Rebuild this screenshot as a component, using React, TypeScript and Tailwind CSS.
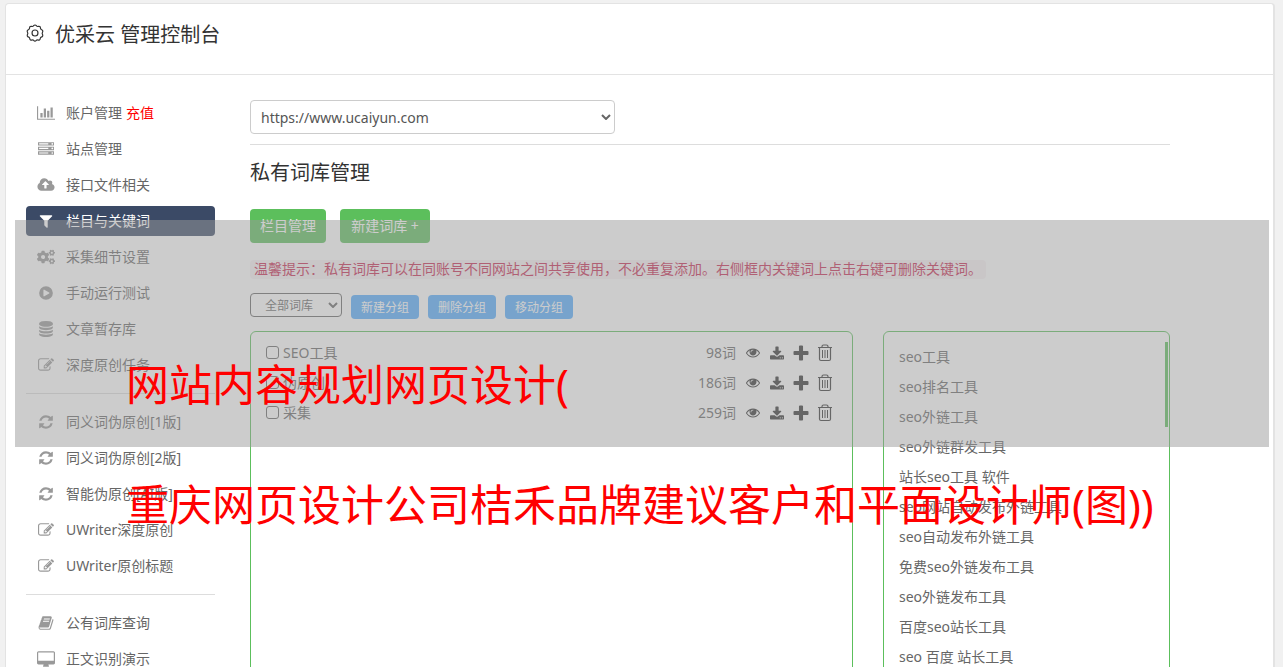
import type { ReactNode } from "react";
import clsx from "clsx";
import { FaCogs } from "react-icons/fa";

interface GlyphProps {
  viewBox: string;
  d: string;
  className?: string;
}

interface NavItem {
  label: string;
  icon: ReactNode;
  badge?: string;
  active?: boolean;
}

const Glyph = ({ viewBox, d, className }: GlyphProps) => (
  <svg viewBox={viewBox} className={clsx("shrink-0", className)} fill="currentColor" fillRule="evenodd" aria-hidden="true">
    <path d={d} />
  </svg>
);

const ChartIcon = () => (
  <Glyph
    className="h-4 w-[18px]"
    viewBox="0 0 2048 1792"
    d="M640 896v512H384V896h256zm384-512v1024H768V384h256zm1024 1152v128H0V128h128v1408h1920zm-640-896v768h-256V640h256zm384-384v1152h-256V256h256z"
  />
);

const ServerIcon = () => (
  <Glyph
    className="size-4"
    viewBox="0 0 1792 1792"
    d="M128 1408h1024v-128H128v128zm0-512h1024V768H128v128zm1568 448q0-40-28-68t-68-28-68 28-28 68 28 68 68 28 68-28 28-68zM128 384h1024V256H128v128zm1568 448q0-40-28-68t-68-28-68 28-28 68 28 68 68 28 68-28 28-68zm0-512q0-40-28-68t-68-28-68 28-28 68 28 68 68 28 68-28 28-68zm96 832v384H0v-384h1792zm0-512v384H0V640h1792zm0-512v384H0V128h1792z"
  />
);

const CloudIcon = () => (
  <Glyph
    className="h-4 w-[18px]"
    viewBox="0 0 1920 1792"
    d="M1280 864q0-14-9-23L919 489q-9-9-23-9t-23 9L522 840q-10 12-10 24 0 14 9 23t23 9h224v352q0 13 9.500 22.500t22.500 9.500h192q13 0 22.500-9.500t9.500-22.500V896h224q13 0 22.500-9.500t9.500-22.500zm640 288q0 159-112.500 271.500T1536 1536H448q-185 0-316.500-131.500T0 1088q0-130 70-240t188-165q-2-30-2-43 0-212 150-362t362-150q156 0 285.500 87T1242 446q71-62 166-62 106 0 181 75t75 181q0 76-41 138 130 31 213.500 135.500T1920 1152z"
  />
);

const FilterIcon = () => (
  <Glyph
    className="size-4"
    viewBox="0 0 1792 1792"
    d="M1595 295q17 41-14 70l-493 493v742q0 42-39 59-13 5-25 5-27 0-45-19l-256-256q-19-19-19-45V858L211 365q-31-29-14-70 17-39 59-39h1280q42 0 59 39z"
  />
);

const PlayIcon = () => (
  <Glyph
    className="size-4"
    viewBox="0 0 1792 1792"
    d="M896 128a768 768 0 1 1 0 1536a768 768 0 1 1 0-1536zM1280 896q0-37-32-55L704 521q-31-19-64-1-32 19-32 56v640q0 37 32 56 16 8 32 8 17 0 32-9l544-320q32-18 32-55z"
  />
);

const DatabaseIcon = () => (
  <Glyph
    className="h-4 w-[14px]"
    viewBox="0 0 1536 1792"
    d="M768 768q237 0 443-43t325-127v170q0 69-103 128t-280 93.500T768 1024t-385-34.500T103 896 0 768V598q119 84 325 127t443 43zm0 768q237 0 443-43t325-127v170q0 69-103 128t-280 93.500-385 34.500-385-34.500T103 1664 0 1536v-170q119 84 325 127t443 43zm0-384q237 0 443-43t325-127v170q0 69-103 128t-280 93.500-385 34.500-385-34.500T103 1280 0 1152V982q119 84 325 127t443 43zM768 0q208 0 385 34.500T1433 128t103 128v128q0 69-103 128t-280 93.500T768 640t-385-34.500T103 512 0 384V256q0-69 103-128t280-93.500T768 0z"
  />
);

const EditIcon = () => (
  <Glyph
    className="size-4"
    viewBox="0 0 1792 1792"
    d="M888 1184l116-116-152-152-116 116v56h96v96h56zm440-720q-16-16-33 1L945 815q-17 17-1 33t33-1l350-350q17-17 1-33zm80 594v190q0 119-84.500 203.500T1120 1536H288q-119 0-203.500-84.500T0 1248V416q0-119 84.500-203.500T288 128h832q63 0 117 25 15 7 18 23 3 17-9 29l-49 49q-14 14-32 8-23-6-45-6H288q-66 0-113 47t-47 113v832q0 66 47 113t113 47h832q66 0 113-47t47-113v-126q0-13 9-22l64-64q15-15 35-7t20 29zm-96-738l288 288-672 672H640V992zm444 132l-92 92-288-288 92-92q28-28 68-28t68 28l152 152q28 28 28 68t-28 68z"
  />
);

const RefreshIcon = () => (
  <Glyph
    className="size-4"
    viewBox="0 0 1792 1792"
    d="M1639 1056q0 5-1 7-64 268-268 434.500T892 1664q-146 0-282.500-55T366 1452l-129 129q-19 19-45 19t-45-19-19-45v-448q0-26 19-45t45-19h448q26 0 45 19t19 45-19 45l-137 137q71 66 161 102t187 36q134 0 250-65t186-179q11-17 53-117 8-23 30-23h192q13 0 22.500 9.500t9.500 22.500zm25-800v448q0 26-19 45t-45 19h-448q-26 0-45-19t-19-45 19-45l138-138Q1097 384 896 384q-134 0-250 65T460 628q-11 17-53 117-8 23-30 23H178q-13 0-22.500-9.500T146 736v-7q65-268 270-434.500T896 128q146 0 284 55.500T1425 340l130-129q19-19 45-19t45 19 19 45z"
  />
);

const BookIcon = () => (
  <Glyph
    className="size-4"
    viewBox="0 0 1664 1792"
    d="M1639 478q40 57 18 129l-275 906q-19 64-76.500 107.500T1183 1664H260q-77 0-148.500-53.500T12 1479q-24-67-2-127 0-4 3-27t4-37q1-8-3-21.500t-3-19.500q2-11 8-21t16.500-23.500T52 1179q23-38 45-91.500t30-91.500q3-10 .5-30t-.5-28q3-11 17-28t17-23q21-36 42-92t25-90q1-9-2.500-32t.5-28q4-13 22-30.500t22-22.500q19-26 42.500-84.500T339 411q1-8-3-25.500t-2-26.500q2-8 9-18t18-23 17-21q8-12 16.500-30.500t15-35 16-36T424.500 163t23.500-23.500T484 128.500t47.500 4.500l-1 3q38-9 51-9h761q74 0 114 56t18 130l-274 906q-36 119-71.500 153.500T1001 1408H132q-27 0-38 15-11 16-1 43 24 70 144 70h923q29 0 56-15.500t35-41.500l300-987q7-22 5-57 38 15 59 43zm-1064 2q-4 13 2 22.500t20 9.500h608q13 0 25.500-9.500T1247 480l21-64q4-13-2-22.500t-20-9.500H638q-13 0-25.500 9.500T596 416zm-83 256q-4 13 2 22.500t20 9.500h608q13 0 25.500-9.500T1164 736l21-64q4-13-2-22.500t-20-9.500H555q-13 0-25.500 9.500T513 672z"
  />
);

const DesktopIcon = () => (
  <Glyph
    className="h-4 w-[18px]"
    viewBox="0 0 1920 1664"
    d="M1792 992V160q0-13-9.500-22.500T1760 128H160q-13 0-22.500 9.500T128 160v832q0 13 9.500 22.500t22.500 9.500h1600q13 0 22.500-9.500t9.500-22.500zm128-832v1088q0 66-47 113t-113 47h-544q0 37 16 77.500t32 71 16 43.500q0 26-19 45t-45 19H704q-26 0-45-19t-19-45q0-14 16-44t32-70 16-78H160q-66 0-113-47T0 1248V160q0-66 47-113T160 0h1600q66 0 113 47t47 113z"
  />
);

const EyeIcon = () => (
  <Glyph
    className="size-[14px]"
    viewBox="0 64 1792 1792"
    d="M1664 960q-152-236-381-353 61 104 61 225 0 185-131.500 316.500T896 1280t-316.500-131.500T448 832q0-121 61-225-229 117-381 353 133 205 333.500 326.500T896 1408t434.500-121.500T1664 960zm-720-384q0-20-14-34t-34-14q-125 0-214.500 89.500T592 832q0 20 14 34t34 14 34-14 14-34q0-86 61-147t147-61q20 0 34-14t14-34zm848 384q0 34-20 69-140 230-376.500 368.500T896 1536t-499.500-139T20 1029Q0 994 0 960t20-69q140-229 376.500-368T896 384t499.500 139T1772 891q20 35 20 69z"
  />
);

const DownloadIcon = () => (
  <Glyph
    className="size-[14px]"
    viewBox="64 0 1664 1536"
    d="M1344 1344q0-26-19-45t-45-19-45 19-19 45 19 45 45 19 45-19 19-45zm256 0q0-26-19-45t-45-19-45 19-19 45 19 45 45 19 45-19 19-45zm128-224v320q0 40-28 68t-68 28H160q-40 0-68-28t-28-68v-320q0-40 28-68t68-28h465l135 136q58 56 136 56t136-56l136-136h464q40 0 68 28t28 68zm-325-569q17 41-14 70l-448 448q-18 19-45 19t-45-19L403 621q-31-29-14-70 17-39 59-39h256V64q0-26 19-45t45-19h256q26 0 45 19t19 45v448h256q42 0 59 39z"
  />
);

const PlusIcon = () => (
  <Glyph
    className="size-4"
    viewBox="144 80 1504 1504"
    d="M1600 736v192q0 40-28 68t-68 28h-416v416q0 40-28 68t-68 28H800q-40 0-68-28t-28-68v-416H288q-40 0-68-28t-28-68V736q0-40 28-68t68-28h416V224q0-40 28-68t68-28h192q40 0 68 28t28 68v416h416q40 0 68 28t28 68z"
  />
);

const TrashIcon = () => (
  <svg viewBox="0 0 16 18" className="h-[18px] w-4 shrink-0" fill="none" stroke="currentColor" aria-hidden="true">
    <path d="M1 3.500h14M2.500 3.500v11.500q0 1.500 1.500 1.500h8q1.500 0 1.500-1.500V3.500M5 3.500V2.500q0-1.500 1.500-1.500h3q1.500 0 1.500 1.500v1" strokeWidth="1.200" />
    <path d="M5.500 6v8M8 6v8M10.500 6v8" />
  </svg>
);

const GearIcon = () => (
  <svg viewBox="0 0 20 20" className="size-[18px] shrink-0" fill="none" stroke="currentColor" strokeWidth="1.300" strokeLinejoin="round" aria-hidden="true">
    <path d="M8.200 2.200Q10 0 11.800 2.200Q12.300 3 13.200 2.700Q16 2 16.100 4.800Q16.100 5.700 17 6.100Q19.600 7.200 18.200 9.600Q17.700 10.400 18.200 11.200Q19.500 13.600 16.900 14.600Q16 15 15.900 15.900Q15.500 18.500 12.900 17.700Q12.100 17.400 11.500 18.100Q10 19.800 8.500 18.100Q7.900 17.400 7.100 17.700Q4.500 18.500 4.100 15.900Q4 15 3.100 14.600Q0.500 13.600 1.800 11.200Q2.300 10.400 1.800 9.600Q0.400 7.200 3 6.100Q3.900 5.700 3.900 4.800Q4 2 6.800 2.700Q7.700 3 8.200 2.200Z" />
    <circle cx="10" cy="10" r="3.300" />
  </svg>
);

const navGroups: NavItem[][] = [
  [
    { label: "账户管理", icon: <ChartIcon />, badge: "充值" },
    { label: "站点管理", icon: <ServerIcon /> },
    { label: "接口文件相关", icon: <CloudIcon /> },
    { label: "栏目与关键词", icon: <FilterIcon />, active: true },
    { label: "采集细节设置", icon: <FaCogs className="size-[18px]" /> },
    { label: "手动运行测试", icon: <PlayIcon /> },
    { label: "文章暂存库", icon: <DatabaseIcon /> },
    { label: "深度原创任务", icon: <EditIcon /> },
  ],
  [
    { label: "同义词伪原创[1版]", icon: <RefreshIcon /> },
    { label: "同义词伪原创[2版]", icon: <RefreshIcon /> },
    { label: "智能伪原创[AI版]", icon: <RefreshIcon /> },
    { label: "UWriter深度原创", icon: <EditIcon /> },
    { label: "UWriter原创标题", icon: <EditIcon /> },
  ],
  [
    { label: "公有词库查询", icon: <BookIcon /> },
    { label: "正文识别演示", icon: <DesktopIcon /> },
  ],
];

const libraries = [
  { name: "SEO工具", count: 98 },
  { name: "伪原创", count: 186 },
  { name: "采集", count: 259 },
];

const keywords = [
  "seo工具",
  "seo排名工具",
  "seo外链工具",
  "seo外链群发工具",
  "站长seo工具 软件",
  "seo网站自动发布外链工具",
  "seo自动发布外链工具",
  "免费seo外链发布工具",
  "seo外链发布工具",
  "百度seo站长工具",
  "seo 百度 站长工具",
];

const groupActions = ["新建分组", "删除分组", "移动分组"];

const rowActions = [
  { label: "查看", icon: <EyeIcon /> },
  { label: "下载", icon: <DownloadIcon /> },
  { label: "添加", icon: <PlusIcon /> },
  { label: "删除", icon: <TrashIcon /> },
];

function Chevron() {
  return (
    <svg viewBox="0 0 10 6" className="pointer-events-none absolute right-1 top-1/2 h-[6px] w-[10px] -translate-y-1/2" fill="none" stroke="currentColor" strokeWidth="2" aria-hidden="true">
      <path d="M1 1l4 4 4-4" />
    </svg>
  );
}

function Sidebar() {
  return (
    <nav className="w-[189px] shrink-0">
      {navGroups.map((group, gIdx) => (
        <ul
          key={gIdx}
          className={clsx("flex flex-col gap-1.5", gIdx > 0 && "mt-[13px] border-t border-[#ddd] pt-[13px]")}
        >
          {group.map((item) => (
            <li key={item.label}>
              <a
                href="#"
                className={clsx(
                  "flex h-[30px] items-center rounded pl-[10px]",
                  item.active ? "bg-[#3b4a66] text-white" : "text-[#666]"
                )}
              >
                <span className={clsx("mr-[10px] flex w-5 justify-center", !item.active && "text-[#999]")}>
                  {item.icon}
                </span>
                {item.label}
                {item.badge && <span className="ml-1 text-[#f00]">{item.badge}</span>}
              </a>
            </li>
          ))}
        </ul>
      ))}
    </nav>
  );
}

function LibraryPanel() {
  return (
    <ul className="min-w-0 flex-1 rounded-md border border-[#5cbf5c] px-[15px] py-1.5">
      {libraries.map((lib) => (
        <li key={lib.name} className="flex h-[30px] items-center justify-between">
          <label className="flex items-center gap-1">
            <input type="checkbox" className="mb-0.5 size-[13px] appearance-none rounded-[3px] border border-[#666] bg-white" />
            {lib.name}
          </label>
          <div className="flex items-center">
            <span className="mr-[5px]">{lib.count}词</span>
            {rowActions.map((action) => (
              <button key={action.label} type="button" aria-label={action.label} className="flex w-6 items-center justify-center text-[#333]">
                {action.icon}
              </button>
            ))}
          </div>
        </li>
      ))}
    </ul>
  );
}

function KeywordPanel() {
  return (
    <div className="flex w-[287px] shrink-0 items-start justify-between rounded-md border border-[#5cbf5c] py-[10px] pl-[15px] pr-px">
      <ul>
        {keywords.map((word) => (
          <li key={word} className="flex h-[30px] items-center">
            {word}
          </li>
        ))}
      </ul>
      <div className="h-[85px] w-[3px] bg-[#5cbf5c]" />
    </div>
  );
}

function Banner() {
  return (
    <div className="pointer-events-none absolute left-[15px] right-[14px] top-[220px]">
      <div className="h-[227px] bg-[#999]/50" />
      <div className="absolute left-[111px] top-[105px] whitespace-nowrap text-[43px] leading-[120px] text-[#f00]">
        <p>网站内容规划网页设计(</p>
        <p>重庆网页设计公司桔禾品牌建议客户和平面设计师(图))</p>
      </div>
    </div>
  );
}

export default function App() {
  return (
    <div className="relative flex h-screen flex-col overflow-hidden bg-[#f1f1f1] pl-[5px] pr-[8px] pt-[3px] font-['Noto_Sans','Noto_Sans_CJK_SC',sans-serif] text-sm text-[#666]">
      <div className="flex min-h-0 flex-1 flex-col rounded-t border border-b-0 border-r-2 border-[#e3e3e3] bg-white">
        <header className="flex h-[71px] shrink-0 items-start gap-[11px] border-b border-[#e3e3e3] px-5 pt-4 text-[#333]">
          <span className="pt-1">
            <GearIcon />
          </span>
          <h1 className="text-xl leading-[30px]">优采云 管理控制台</h1>
        </header>

        <div className="flex min-h-0 flex-1 gap-[35px] pl-5 pr-[103px]">
          <div className="pt-[23px]">
            <Sidebar />
          </div>

          <main className="flex min-w-0 flex-1 flex-col pt-[25px]">
            <div className="relative w-[365px]">
              <select aria-label="站点" className="h-[34px] w-full appearance-none rounded border border-[#ccc] bg-white px-[10px] pt-0.5 text-[#555]">
                <option>https://www.ucaiyun.com</option>
              </select>
              <Chevron />
            </div>
            <hr className="mt-[10px] border-[#ddd]" />
            <h2 className="mt-[13px] text-xl leading-[30px] text-[#333]">私有词库管理</h2>

            <div className="mt-[21px] flex gap-[14px]">
              <button type="button" className="h-[34px] w-[76px] rounded bg-[#5cbf5c] text-white">栏目管理</button>
              <button type="button" className="h-[34px] w-[90px] rounded bg-[#5cbf5c] text-white">新建词库 +</button>
            </div>

            <p className="mt-[17px] h-[19px] shrink-0 self-start whitespace-nowrap rounded bg-[#f9f2f4] px-1 leading-[18px] text-[#c7254e]">
              温馨提示：私有词库可以在同账号不同网站之间共享使用，不必重复添加。右侧框内关键词上点击右键可删除关键词。
            </p>

            <div className="mt-[14px] flex gap-[9px] text-xs">
              <div className="relative h-6 w-[92px]">
                <select aria-label="词库分组" className="h-6 w-full appearance-none rounded border border-[#666] bg-white pl-[14px] pt-0.5">
                  <option>全部词库</option>
                </select>
                <Chevron />
              </div>
              {groupActions.map((label) => (
                <button key={label} type="button" className="mt-0.5 h-6 w-[68px] rounded bg-[#55adff] pt-0.5 text-white">
                  {label}
                </button>
              ))}
            </div>

            <div className="mt-3 flex flex-1 gap-[30px]">
              <LibraryPanel />
              <KeywordPanel />
            </div>
          </main>
        </div>
      </div>
      <Banner />
    </div>
  );
}
